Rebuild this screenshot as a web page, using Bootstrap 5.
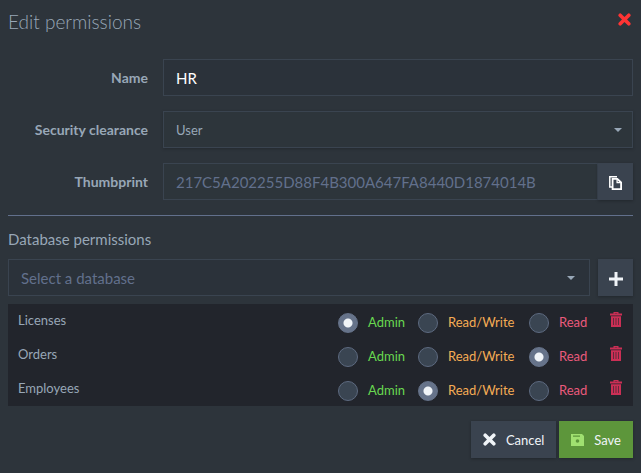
<!DOCTYPE html>
<html lang="en">
<head>
<meta charset="utf-8">
<meta name="viewport" content="width=device-width, initial-scale=1">
<title>Edit permissions</title>
<link href="https://cdn.jsdelivr.net/npm/bootstrap@5.3.0/dist/css/bootstrap.min.css" rel="stylesheet">
<style>
body { background: #2d343b; color: #98a7b7; font-family: Lato, sans-serif; font-size: 13px; line-height: 20px; }
.panel { padding: 8px 8px 15px; }
.panel-title { font-size: 19px; font-weight: 300; line-height: 27px; }
.field-row { display: grid; grid-template-columns: 140px minmax(0, 1fr); column-gap: 15px; align-items: center; margin-bottom: 15px; }
.field-label { font-size: 14px; font-weight: 700; text-align: right; }
.form-control, .form-select { height: 37px; padding: 4px 12px; border: 1px solid #3a4450; border-radius: 0; font-size: 15px; line-height: 24px; }
.form-control, .form-control:focus { background-color: #2b323a; color: #fff; }
.form-control[readonly] { background-color: #2d353b; color: #62708c; }
.form-select, .form-select:focus { color: #98a7b7; background: #2d353b url("data:image/svg+xml,%3Csvg xmlns='http://www.w3.org/2000/svg' viewBox='0 0 8 4'%3E%3Cpath fill='%2398a7b7' d='M0 0h8L4 4z'/%3E%3C/svg%3E") no-repeat right 10px center / 8px 4px; }
.clearance { font-size: 13px; box-shadow: 0 1px 3px rgba(0,0,0,.2); }
.form-select.picker { background-color: #2b323a; background-position: right 14px center; color: #62708c; }
.btn { height: 37px; border: 0; border-radius: 0; font-size: 13px; line-height: 20px; color: #f0f4f8; box-shadow: 0 1px 3px rgba(0,0,0,.25); --bs-btn-color: #f0f4f8; --bs-btn-hover-color: #fff; }
.btn-slate { background: #3a434f; }
.btn-save { background: #5d963b; }
.btn-square { width: 35px; padding: 0; }
.btn-bare { background: none; border: 0; padding: 0; line-height: 0; }
.btn-close-panel { padding: 5px 2px 0 0; }
.rule { border: 0; border-top: 1px solid #62708c; opacity: 1; margin: 0 0 11px; }
.section-title { font-size: 15px; font-weight: 400; line-height: 24px; margin: 0 0 8px; }
.perm-list { background: #22252c; margin: 8px 0 15px; }
.perm-row { display: grid; grid-template-columns: minmax(0, 1fr) 80px 111px 81px 12px; height: 34px; padding: 0 11px 0 10px; }
.perm-name { padding-top: 6px; }
.perm-row .level { display: flex; align-items: center; gap: 10px; height: 20px; margin-top: 9px; }
.level input { appearance: none; width: 20px; height: 20px; margin: 0; flex: none; border: 1px solid #5d6a80; border-radius: 50%; background: #3a4552; }
.level input:checked { background: radial-gradient(circle, #f0f4f8 0 4px, #66738a 5px); border-color: #66738a; }
.level label { line-height: 18px; padding-bottom: 2px; }
.green { color: #68d850; } .amber { color: #f5ac55; } .pink { color: #ea5a7c; }
.bin { padding-top: 8px; }
.footer-bar { gap: 3px; }
.footer-bar .btn { gap: 10px; padding: 0 12px; }
</style>
<script src="https://cdn.jsdelivr.net/npm/bootstrap@5.3.0/dist/js/bootstrap.bundle.min.js"></script>
</head>
<body>
<svg class="d-none" aria-hidden="true">
<symbol id="cross" viewBox="0 0 13 13"><path d="M2.2 2.2l8.6 8.6M10.8 2.2l-8.6 8.6" stroke="currentColor" stroke-width="3.6" stroke-linecap="round" fill="none"/></symbol>
<symbol id="trash" viewBox="0 0 12 15"><path fill="#cb2f55" d="M3.5 0h5v1.5H12v2H0v-2h3.5zM1 4.3h10V15H1z"/><path fill="#22252c" opacity=".75" d="M4.7 1h2.6v.6H4.7zM3.2 6h.8v7h-.8zM5.6 6h.8v7h-.8zM8 6h.8v7H8z"/></symbol>
</svg>
<main class="panel">
<form>
<header class="d-flex justify-content-between align-items-start mb-4">
<h1 class="panel-title m-0">Edit permissions</h1>
<button type="button" class="btn-bare btn-close-panel" aria-label="Close"><svg width="13" height="13" color="#ff3434"><use href="#cross"/></svg></button>
</header>
<div class="field-row"><label class="field-label" for="name">Name</label><input id="name" class="form-control" value="HR"></div>
<div class="field-row"><label class="field-label" for="clearance">Security clearance</label><select id="clearance" class="form-select clearance"><option>User</option></select></div>
<div class="field-row"><label class="field-label" for="thumb">Thumbprint</label>
<div class="d-flex"><input id="thumb" class="form-control" value="217C5A202255D88F4B300A647FA8440D1874014B" readonly><button type="button" class="btn btn-slate btn-square flex-shrink-0" aria-label="Copy thumbprint"><svg width="13" height="14" viewBox="0 0 13 14" fill="none" stroke="#fff"><path stroke-width="1.5" d="M8 .8H.8V11H3"/><path stroke-width="1.8" d="M3.6 2.8h4.7l3.8 3.7v6.6H3.6z"/><path stroke-width="1.3" d="M8.1 3v3.7H12"/></svg></button></div></div>
<hr class="rule">
<h2 class="section-title">Database permissions</h2>
<div class="d-flex gap-2"><select class="form-select picker" aria-label="Database"><option>Select a database</option></select><button type="button" class="btn btn-slate btn-square flex-shrink-0" aria-label="Add database"><svg width="14" height="14" viewBox="0 0 14 14"><path d="M7 0v14M0 7h14" stroke="#f0f4f8" stroke-width="3"/></svg></button></div>
<div class="perm-list">
<div class="perm-row"><span class="perm-name">Licenses</span>
<span class="level green"><input type="radio" name="p1" id="a1" checked><label for="a1">Admin</label></span>
<span class="level amber"><input type="radio" name="p1" id="w1"><label for="w1">Read/Write</label></span>
<span class="level pink"><input type="radio" name="p1" id="r1"><label for="r1">Read</label></span>
<button type="button" class="btn-bare bin align-self-start" aria-label="Delete Licenses"><svg width="12" height="15"><use href="#trash"/></svg></button></div>
<div class="perm-row"><span class="perm-name">Orders</span>
<span class="level green"><input type="radio" name="p2" id="a2"><label for="a2">Admin</label></span>
<span class="level amber"><input type="radio" name="p2" id="w2"><label for="w2">Read/Write</label></span>
<span class="level pink"><input type="radio" name="p2" id="r2" checked><label for="r2">Read</label></span>
<button type="button" class="btn-bare bin align-self-start" aria-label="Delete Orders"><svg width="12" height="15"><use href="#trash"/></svg></button></div>
<div class="perm-row"><span class="perm-name">Employees</span>
<span class="level green"><input type="radio" name="p3" id="a3"><label for="a3">Admin</label></span>
<span class="level amber"><input type="radio" name="p3" id="w3" checked><label for="w3">Read/Write</label></span>
<span class="level pink"><input type="radio" name="p3" id="r3"><label for="r3">Read</label></span>
<button type="button" class="btn-bare bin align-self-start" aria-label="Delete Employees"><svg width="12" height="15"><use href="#trash"/></svg></button></div>
</div>
<footer class="footer-bar d-flex justify-content-end">
<button type="button" class="btn btn-slate d-flex align-items-center"><svg width="13" height="13"><use href="#cross"/></svg>Cancel</button>
<button type="submit" class="btn btn-save d-flex align-items-center"><svg width="13" height="12" viewBox="0 0 13 12"><path fill="#a0e070" fill-rule="evenodd" d="M0 0h11l2 2v10H0zM2 1.5v1.3h7V1.5z"/><circle cx="6.5" cy="7" r="1.8" fill="#5d963b"/></svg>Save</button>
</footer>
</form>
</main>
</body>
</html>
